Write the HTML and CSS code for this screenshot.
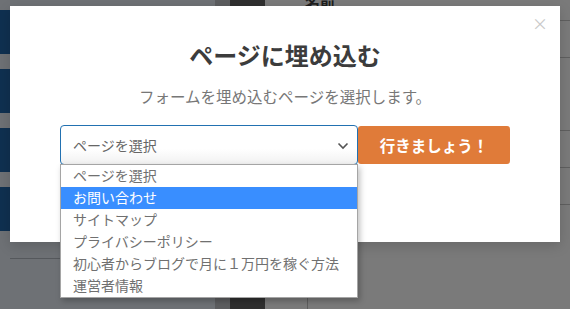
FILE: index.html
```html
<!DOCTYPE html>
<html lang="ja">
<head>
    <meta charset="UTF-8" />
    <title>ページに埋め込む</title>
    <link rel="stylesheet" href="styles.css">
</head>
<body>
    <div class="page">
        <div class="side">
            <div class="side-strip">
                <div class="blue"></div>
                <div class="blue"></div>
                <div class="blue"></div>
                <div class="blue"></div>
            </div>
            <div class="side-fill">
                <div class="side-line"></div>
            </div>
        </div>
        <div class="col-edge"></div>
        <div class="col-dark"></div>
        <div class="content">
            <div class="field-label">名前<span class="req">*</span></div>
            <div class="bottom-line"></div>
        </div>
        <div class="right-edge">
            <div class="rline"></div>
            <div class="rline"></div>
            <div class="rline"></div>
            <div class="rline"></div>
            <div class="rline"></div>
        </div>
    </div>

    <!-- モーダル -->
    <div class="modal">
        <span class="close">×</span>
        <h2 class="modal-title">ページに埋め込む</h2>
        <p class="modal-desc">フォームを埋め込むページを選択します。</p>
        <div class="embed-row">
            <div class="select-wrap">
                <div class="select-box">
                    <span>ページを選択</span>
                    <svg class="chevron" width="12" height="8" viewBox="0 0 12 8">
                        <path d="M1.5 1.5 L6 6 L10.5 1.5" fill="none" stroke="#555" stroke-width="1.6"/>
                    </svg>
                </div>
                <ul class="select-list">
                    <li>ページを選択</li>
                    <li class="active">お問い合わせ</li>
                    <li>サイトマップ</li>
                    <li>プライバシーポリシー</li>
                    <li>初心者からブログで月に１万円を稼ぐ方法</li>
                    <li>運営者情報</li>
                </ul>
            </div>
            <button class="btn-go">行きましょう！</button>
        </div>
    </div>
</body>
</html>
```

FILE: styles.css
```css
/* 基本 */
* {
    box-sizing: border-box;
}
body {
    margin: 0;
    font-family: "Noto Sans CJK JP", "Noto Sans", sans-serif;
    background: #7a7a7a;
    overflow: hidden;
}

/* 背景のページ（オーバーレイ越し） */
.page {
    display: flex;
    height: 309px;
}
.side {
    display: flex;
    width: 215px;
    background: #6e7175;
}
.side-strip {
    width: 10px;
    padding-top: 10px;
    display: flex;
    flex-direction: column;
    gap: 15px;
}
.blue {
    height: 44px;
    background: #0f3050;
}
.side-fill {
    flex: 1;
    padding-top: 258px;
}
.side-line {
    height: 1px;
    background: #55585c;
}
.col-edge {
    width: 15px;
    background: #5c5d5f;
}
.col-dark {
    width: 35px;
    background: #2f2f2f;
}
.content {
    flex: 1;
    display: flex;
    flex-direction: column;
    justify-content: space-between;
}
.field-label {
    margin-top: -9px;
    margin-left: 40px;
    font-size: 15px;
    font-weight: bold;
    color: #1e1e1e;
}
.req {
    color: #7a1a1a;
    font-size: 10px;
    vertical-align: top;
}
.bottom-line {
    margin-left: 42px;
    width: 1px;
    height: 11px;
    background: #5e5e5e;
}
.right-edge {
    width: 10px;
    display: flex;
    flex-direction: column;
    padding-top: 20px;
}
.rline {
    height: 1px;
    background: #5f5f5f;
    margin-bottom: 36px;
}
.rline:nth-child(3) {
    margin-top: 36px;
}

/* モーダル */
.modal {
    position: absolute;
    left: 10px;
    top: 6px;
    width: 550px;
    height: 236px;
    background: #fff;
    text-align: center;
    padding-top: 31px;
    box-shadow: 0 4px 12px rgba(0,0,0,0.15);
}
.close {
    position: absolute;
    top: 7px;
    right: 12px;
    font-size: 16px;
    color: #c9c9c9;
    line-height: 20px;
}
.modal-title {
    margin: 0;
    font-size: 24px;
    line-height: 36px;
    font-weight: bold;
    color: #3c3c3c;
}
.modal-desc {
    margin: 11px 0 0;
    font-size: 15.5px;
    line-height: 24px;
    color: #777;
}
.embed-row {
    display: flex;
    justify-content: center;
    align-items: center;
    margin-top: 17px;
}
.select-wrap {
    position: relative;
}
.select-box {
    width: 298px;
    height: 40px;
    border: 1px solid #2271b1;
    border-radius: 4px;
    background: linear-gradient(#fff 60%, #f1f1f1);
    display: flex;
    align-items: center;
    justify-content: space-between;
    padding: 0 8px 0 12px;
    font-size: 14px;
    color: #666;
}
.chevron {
    margin-top: 2px;
}
.select-list {
    position: absolute;
    left: 0;
    top: 39px;
    width: 298px;
    margin: 0;
    padding: 0;
    list-style: none;
    background: #fff;
    border: 1px solid #a5a5a5;
    box-shadow: 2px 3px 6px rgba(0,0,0,0.25);
    text-align: left;
    z-index: 2;
}
.select-list li {
    height: 22px;
    line-height: 20px;
    padding-left: 12px;
    font-size: 14px;
    color: #707070;
    white-space: nowrap;
}
.select-list li.active {
    background: #398eff;
    color: #fff;
}
.btn-go {
    width: 152px;
    height: 38px;
    border: none;
    border-radius: 3px;
    background: #e07b39;
    color: #fff;
    font-family: inherit;
    font-size: 15.5px;
    font-weight: bold;
    padding: 0;
}
```
